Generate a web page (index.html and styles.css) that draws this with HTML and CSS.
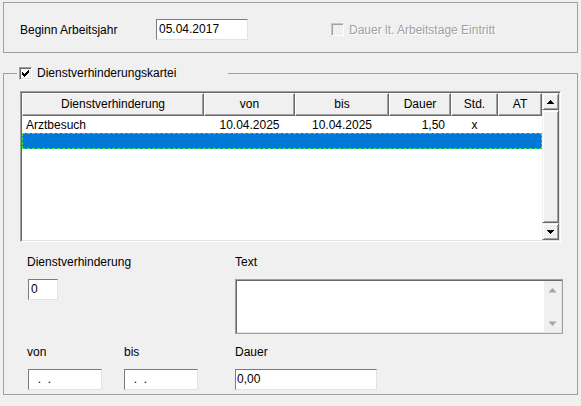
FILE: index.html
```html
<!DOCTYPE html>
<html lang="de">
<head>
<meta charset="utf-8">
<title>Dienstverhinderungskartei</title>
<link rel="stylesheet" href="styles.css">
</head>
<body>
<div class="form">
  <div class="topbox">
    <span class="lbl begin-lbl">Beginn Arbeitsjahr</span>
    <div class="field begin-field">05.04.2017</div>
    <span class="chk chk-disabled"></span>
    <span class="lbl lbl-disabled">Dauer lt. Arbeitstage Eintritt</span>
  </div>

  <fieldset class="kartei">
    <legend class="kartei-legend">
      <span class="chk chk-on">
        <svg width="13" height="13" viewBox="0 0 13 13" shape-rendering="crispEdges"><path fill="#000" d="M9 3h1v1h-1z M8 4h2v1h-2z M3 5h1v1h-1z M7 5h3v1h-3z M3 6h2v1h-2z M6 6h3v1h-3z M3 7h5v1h-5z M4 8h3v1h-3z M5 9h1v1h-1z"/></svg>
      </span>
      <span class="legend-text">Dienstverhinderungskartei</span>
    </legend>

    <div class="listview">
      <div class="lv-main">
        <div class="lv-head">
          <div class="hc c1">Dienstverhinderung</div>
          <div class="hc c2">von</div>
          <div class="hc c3">bis</div>
          <div class="hc c4">Dauer</div>
          <div class="hc c5">Std.</div>
          <div class="hc c6">AT</div>
        </div>
        <div class="lv-row">
          <div class="cell c1 left">Arztbesuch</div>
          <div class="cell c2">10.04.2025</div>
          <div class="cell c3">10.04.2025</div>
          <div class="cell c4 right">1,50</div>
          <div class="cell c5">x</div>
          <div class="cell c6"></div>
        </div>
        <div class="lv-row selected"></div>
      </div>
      <div class="vscroll">
        <div class="sb-btn">
          <svg width="7" height="4" viewBox="0 0 7 4" shape-rendering="crispEdges"><path fill="#000" d="M3 0h1v1h-1z M2 1h3v1h-3z M1 2h5v1h-5z M0 3h7v1h-7z"/></svg>
        </div>
        <div class="sb-btn sb-thumb"></div>
        <div class="sb-btn">
          <svg width="7" height="4" viewBox="0 0 7 4" shape-rendering="crispEdges"><path fill="#000" d="M0 0h7v1h-7z M1 1h5v1h-5z M2 2h3v1h-3z M3 3h1v1h-1z"/></svg>
        </div>
      </div>
    </div>

    <div class="detail">
      <span class="lbl d-lbl span2">Dienstverhinderung</span>
      <span class="lbl d-lbl col3">Text</span>
      <div class="field nr-field span2">0</div>
      <div class="memo col3">
        <div class="memo-body"></div>
        <div class="memo-scroll">
          <svg width="9" height="6" viewBox="0 0 9 6"><polygon points="0.5,5.5 4.5,1 8.5,5.5" fill="#a3a3a3"/></svg>
          <svg width="9" height="6" viewBox="0 0 9 6"><polygon points="0.5,0.5 8.5,0.5 4.5,5" fill="#a3a3a3"/></svg>
        </div>
      </div>
      <span class="lbl d-lbl2">von</span>
      <span class="lbl d-lbl2">bis</span>
      <span class="lbl d-lbl2">Dauer</span>
      <div class="field date-field von-field">  .  .</div>
      <div class="field date-field">  .  .</div>
      <div class="field dauer-field">0,00</div>
    </div>
  </fieldset>
</div>
</body>
</html>
```
FILE: styles.css
```css
html, body {
  margin: 0;
  padding: 0;
}
body {
  width: 581px;
  height: 406px;
  overflow: hidden;
  background: #f0f0f0;
  color: #000;
  font-family: "Liberation Sans", Arial, sans-serif;
  font-size: 12px;
  line-height: 14px;
}
.form {
  padding: 2px 3px 0 3px;
}

/* ---------- top group ---------- */
.topbox {
  border: 1px solid #a0a0a0;
  height: 45px;
  padding: 4px 0 0 16px;
  display: flex;
  align-items: center;
}
.lbl {
  white-space: nowrap;
}
.begin-lbl {
  width: 136px;
}
.field {
  box-sizing: border-box;
  height: 21px;
  background: #fff;
  border: 1px solid;
  border-color: #7a7a7a #e3e3e3 #e3e3e3 #7a7a7a;
  padding: 0 0 0 2px;
  line-height: 19px;
  white-space: pre;
}
.begin-field {
  width: 92px;
}
.chk {
  box-sizing: border-box;
  width: 13px;
  height: 13px;
  flex: none;
  border: 1px solid;
  border-color: #a0a0a0 #fff #fff #a0a0a0;
  box-shadow: inset 1px 1px #696969, inset -1px -1px #e3e3e3;
  background: #fff;
  position: relative;
}
.chk svg {
  display: block;
  margin: -1px 0 0 -1px;
}
.chk-disabled {
  margin-left: 83px;
  background: #f0f0f0;
  border-color: #c8c8c8 #fff #fff #c8c8c8;
  box-shadow: inset 1px 1px #a0a0a0, inset -1px -1px #f0f0f0;
}
.lbl-disabled {
  margin-left: 5px;
  color: #a0a0a0;
  text-shadow: 1px 1px 0 #fff;
}

/* ---------- second group ---------- */
.kartei {
  margin: 14px 0 0 0;
  border: 1px solid #a0a0a0;
  padding: 11px 18px 4px 16px;
  min-width: 0;
}
.kartei-legend {
  box-sizing: border-box;
  width: 211px;
  height: 13px;
  margin-left: -3px;
  padding: 0 0 0 2px;
  display: flex;
  align-items: center;
}
.legend-text {
  margin-left: 5px;
  line-height: 13px;
}

/* ---------- list view ---------- */
.listview {
  box-sizing: border-box;
  width: 541px;
  height: 151px;
  border: 1px solid;
  border-color: #a0a0a0 #fff #fff #a0a0a0;
  box-shadow: inset 1px 1px #696969, inset -1px -1px #e3e3e3;
  padding: 1px;
  background: #fff;
  display: flex;
}
.lv-main {
  width: 520px;
  background: #fff;
}
.lv-head {
  display: flex;
  height: 23px;
}
.hc {
  box-sizing: border-box;
  height: 23px;
  background: #f0f0f0;
  border: 1px solid;
  border-color: #fff #696969 #696969 #fff;
  box-shadow: inset -1px -1px #a0a0a0;
  text-align: center;
  line-height: 20px;
  white-space: nowrap;
}
.c1 { width: 182px; }
.c2 { width: 91px; }
.c3 { width: 94px; }
.c4 { width: 62px; }
.c5 { width: 47px; }
.c6 { width: 44px; }
.lv-row {
  display: flex;
  height: 16px;
  line-height: 16px;
}
.lv-row:first-of-type {
  margin-top: 0;
}
.lv-head + .lv-row {
  margin-top: 1px;
}
.cell {
  text-align: center;
  white-space: nowrap;
}
.cell.left {
  text-align: left;
  padding-left: 4px;
  box-sizing: border-box;
}
.cell.right {
  text-align: right;
  padding-right: 6px;
  box-sizing: border-box;
}
.lv-row.selected {
  box-sizing: border-box;
  width: 520px;
  background: #0078d7;
  border: 1px dashed #3ee63e;
}
.vscroll {
  width: 17px;
  display: flex;
  flex-direction: column;
}
.sb-btn {
  box-sizing: border-box;
  height: 17px;
  flex: none;
  background: #f0f0f0;
  border: 1px solid;
  border-color: #f0f0f0 #696969 #696969 #f0f0f0;
  box-shadow: inset 1px 1px #fff, inset -1px -1px #a0a0a0;
  display: flex;
  align-items: center;
  justify-content: center;
}
.sb-btn svg {
  display: block;
}
.sb-thumb {
  flex: 1;
}

/* ---------- detail area ---------- */
.detail {
  display: grid;
  grid-template-columns: 97px 111px 1fr;
  margin: 13px 0 0 7px;
  align-items: start;
}
.span2 {
  grid-column: 1 / 3;
}
.col3 {
  grid-column: 3;
}
.nr-field {
  width: 30px;
  margin: 10px 0 0 1px;
}
.memo {
  box-sizing: border-box;
  width: 328px;
  height: 55px;
  margin-top: 10px;
  border: 1px solid;
  border-color: #a0a0a0 #a0a0a0 #a0a0a0 #a0a0a0;
  box-shadow: inset 1px 1px #696969, inset -1px -1px #e3e3e3;
  padding: 1px;
  background: #fff;
  display: flex;
}
.memo-body {
  flex: 1;
}
.memo-scroll {
  width: 17px;
  background: #f0f0f0;
  display: flex;
  flex-direction: column;
  align-items: center;
  justify-content: space-between;
  padding: 6px 0 5px;
}
.memo-scroll svg {
  display: block;
}
.d-lbl2 {
  margin-top: 11px;
}
.date-field {
  width: 74px;
  margin-top: 10px;
}
.von-field {
  margin-left: 1px;
}
.dauer-field {
  width: 142px;
  margin-top: 10px;
  padding-left: 1px;
}
```
